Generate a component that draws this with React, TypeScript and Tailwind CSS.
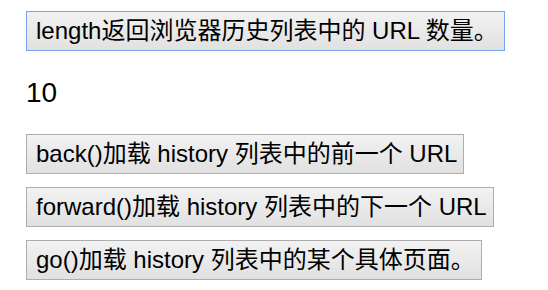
const base =
  "h-[40px] pl-[9px] pr-[6px] border bg-gradient-to-b from-[#f2f2f2] to-[#e1e1e1] text-[24px] leading-none text-black whitespace-nowrap";
const btn = `${base} border-[#adadad]`;
const focused = `${base} border-[#78a4ec]`;

export default function App() {
  return (
    <div
      className="w-[548px] h-[290px] bg-white pl-[26px] pt-[11px] flex flex-col items-start"
      style={{ fontFamily: '"Liberation Sans", "Noto Sans CJK SC", sans-serif' }}
    >
      <button className={focused}>length返回浏览器历史列表中的 URL 数量。</button>
      <p className="mt-[26px] text-[28px] leading-[32px] text-black">10</p>
      <div className="mt-[25px] flex flex-col items-start gap-[13px]">
        <button className={btn}>back()加载 history 列表中的前一个 URL</button>
        <button className={btn}>forward()加载 history 列表中的下一个 URL</button>
        <button className={btn}>go()加载 history 列表中的某个具体页面。</button>
      </div>
    </div>
  );
}
